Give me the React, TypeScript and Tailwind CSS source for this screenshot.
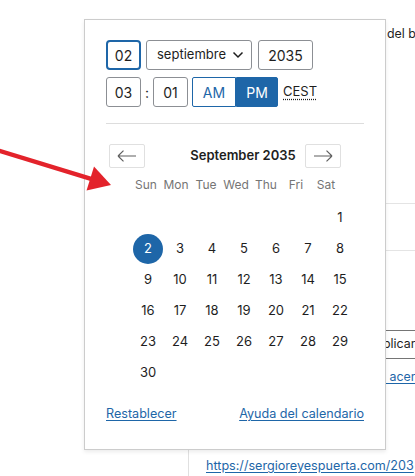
import React from "react";

const WEEKDAYS = ["Sun", "Mon", "Tue", "Wed", "Thu", "Fri", "Sat"];

// September 2035 starts on a Saturday
const DAYS: (number | null)[] = [
  null, null, null, null, null, null,
  ...Array.from({ length: 30 }, (_, i) => i + 1),
];

const SELECTED = 2;

function ArrowLeft() {
  return (
    <svg width="20" height="12" viewBox="0 0 20 12" fill="none">
      <path d="M1 6H19M1 6L6.5 0.6M1 6L6.5 11.4" stroke="#5f5f5f" strokeWidth="1.2" />
    </svg>
  );
}

function ArrowRight() {
  return (
    <svg width="20" height="12" viewBox="0 0 20 12" fill="none">
      <path d="M19 6H1M19 6L13.5 0.6M19 6L13.5 11.4" stroke="#5f5f5f" strokeWidth="1.2" />
    </svg>
  );
}

function Field({
  children,
  className = "",
  focused = false,
}: {
  children: React.ReactNode;
  className?: string;
  focused?: boolean;
}) {
  const edge = focused
    ? "border-2 border-[#1e66a8] rounded-[4px]"
    : "border border-[#8c8f94] rounded-[3px]";
  return (
    <div
      className={
        "h-[30px] flex items-center justify-center text-[14px] text-[#1e1e1e] " + edge + " " + className
      }
    >
      {children}
    </div>
  );
}

function DatePopover() {
  return (
    <div className="absolute left-[84px] top-[19px] w-[302px] h-[431px] bg-white border border-[#cccccc] shadow-[0_2px_4px_rgba(0,0,0,0.08)] pl-[21px] pt-[20px]">
      {/* date fields */}
      <div className="flex items-center">
        <Field focused className="w-[35px]">
          02
        </Field>
        <Field className="ml-[5px] w-[106px] justify-start pl-[10px] gap-[6px]">
          <span className="text-[13px]">septiembre</span>
          <svg width="12" height="8" viewBox="0 0 12 8" fill="none">
            <path d="M1.5 1.5L6 6L10.5 1.5" stroke="#1e1e1e" strokeWidth="1.5" />
          </svg>
        </Field>
        <Field className="ml-[6px] w-[55px]">2035</Field>
      </div>

      {/* time fields */}
      <div className="mt-[7px] flex items-center">
        <Field className="w-[35px]">03</Field>
        <span className="w-[12px] text-center text-[14px] text-[#1e1e1e]">:</span>
        <Field className="w-[35px]">01</Field>
        <div className="ml-[4px] flex h-[30px]">
          <div className="w-[44px] flex items-center justify-center border border-[#1e66a8] rounded-l-[2px] text-[14px] text-[#1e66a8]">
            AM
          </div>
          <div className="w-[42px] flex items-center justify-center bg-[#1e66a8] border border-[#1e66a8] rounded-r-[2px] text-[14px] text-white">
            PM
          </div>
        </div>
        <span className="ml-[5px] text-[13px] text-[#1e1e1e] underline decoration-dotted underline-offset-[3px]">
          CEST
        </span>
      </div>

      <div className="mt-[16px] w-[258px] h-px bg-[#dddddd]" />

      {/* month navigation */}
      <div className="mt-[20px] ml-[3px] flex items-center">
        <button className="w-[36px] h-[24px] flex items-center justify-center border border-[#e0e0e0] rounded-[2px]">
          <ArrowLeft />
        </button>
        <div className="w-[160px] pl-[36px] text-center text-[13px] font-semibold text-[#1e1e1e]">
          September 2035
        </div>
        <button className="w-[36px] h-[24px] flex items-center justify-center border border-[#e0e0e0] rounded-[2px]">
          <ArrowRight />
        </button>
      </div>

      {/* weekday header */}
      <div className="mt-[8px] ml-[25px] grid grid-cols-[repeat(7,30px)] h-[16px] items-center text-[12px] text-[#757575]">
        {WEEKDAYS.map((d) => (
          <span key={d} className="text-center">
            {d}
          </span>
        ))}
      </div>

      {/* days */}
      <div className="mt-[10px] ml-[26px] grid grid-cols-[repeat(7,32px)] auto-rows-[31px] text-[13px] text-[#1e1e1e]">
        {DAYS.map((d, i) => (
          <div key={i} className="flex items-center justify-center">
            {d === SELECTED ? (
              <span className="w-[30px] h-[30px] rounded-full bg-[#1e66a8] text-white flex items-center justify-center">
                {d}
              </span>
            ) : (
              d
            )}
          </div>
        ))}
      </div>

      {/* footer links */}
      <div className="mt-[18px] w-[258px] flex justify-between text-[12.6px] leading-[16px] text-[#1e66a8]">
        <a className="underline underline-offset-[2px]">Restablecer</a>
        <a className="underline underline-offset-[2px]">Ayuda del calendario</a>
      </div>
    </div>
  );
}

export default function App() {
  return (
    <div className="relative w-[415px] h-[476px] bg-white overflow-hidden font-[Inter,sans-serif] text-[#1e1e1e]">
      {/* page content behind the popover */}
      <div className="flex h-[449px]">
        <div className="flex-1" />
        <div className="w-[29px] flex flex-col text-[12.4px] whitespace-nowrap">
          <div className="mt-[24px] h-[20px] leading-[20px] ml-[1px]">del b</div>
          <div className="mt-[159px] h-px bg-[#e4e4e4]" />
          <div className="mt-[46px] h-px bg-[#e4e4e4]" />
          <div className="mt-[79px] h-[29px] border-y border-[#757575] flex items-center">
            <span className="-ml-[3px]">plicar</span>
          </div>
          <div className="mt-[8px] h-[20px] leading-[20px] text-[#1e66a8]">
            <span className="underline underline-offset-[2px] whitespace-pre"> acer</span>
          </div>
        </div>
      </div>
      <div className="h-[27px] pl-[188px]">
        <div className="h-full border-l border-[#e0e0e0] pl-[17px] pt-[7px] text-[12.6px] leading-[20px] whitespace-nowrap">
          <a className="text-[#1e66a8] underline underline-offset-[2px]">https://sergioreyespuerta.com/203</a>
        </div>
      </div>

      <DatePopover />

      {/* annotation arrow */}
      <svg
        className="absolute left-0 top-0 pointer-events-none"
        width="120"
        height="200"
        viewBox="0 0 120 200"
      >
        <line x1="-2" y1="150.4" x2="91" y2="178.9" stroke="#e3232b" strokeWidth="4.5" />
        <polygon points="111,185 86.5,190.5 94,166.5" fill="#e3232b" />
      </svg>
    </div>
  );
}
